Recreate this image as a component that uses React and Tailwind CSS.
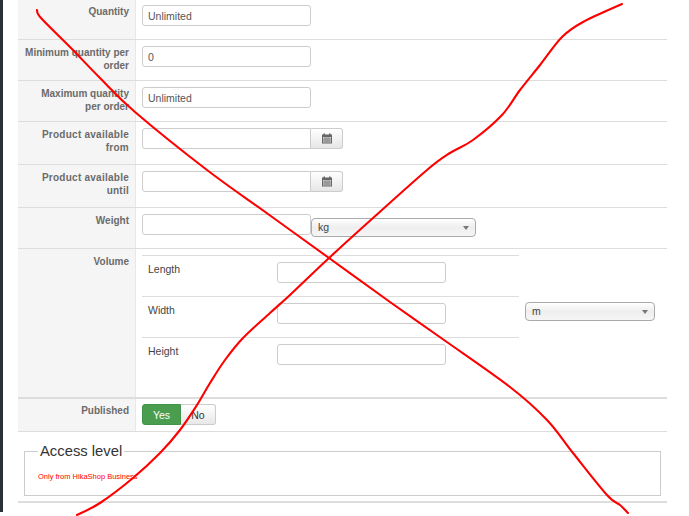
// hand drawn red cross over the form
const STROKE_A = [[37,10],[41,18],[70,47],[100,78],[135,112],[207,170],[268,214],[329,258],[390,302],[444,340],[510,387],[547,420],[573,453],[607,495],[620,505],[628,513]];
const STROKE_B = [[622,4],[583,22],[562,37],[540,65],[520,90],[502,115],[473,140],[450,153],[427,170],[373,218],[329,258],[290,295],[270,313],[243,338],[225,360],[210,383],[197,405],[180,430],[160,453],[133,478],[100,503],[77,515]];

function smoothPath(pts) {
  let d = `M${pts[0][0]} ${pts[0][1]}`;
  for (let i = 0; i < pts.length - 1; i++) {
    const p0 = pts[i - 1] || pts[i];
    const p1 = pts[i];
    const p2 = pts[i + 1];
    const p3 = pts[i + 2] || p2;
    const c1x = p1[0] + (p2[0] - p0[0]) / 6;
    const c1y = p1[1] + (p2[1] - p0[1]) / 6;
    const c2x = p2[0] - (p3[0] - p1[0]) / 6;
    const c2y = p2[1] - (p3[1] - p1[1]) / 6;
    d += ` C${c1x} ${c1y} ${c2x} ${c2y} ${p2[0]} ${p2[1]}`;
  }
  return d;
}

function TextInput({ value, className = '' }) {
  return (
    <div className={`w-[169px] h-[21px] shrink-0 bg-white border border-[#ccc] rounded-[3px] pl-[5px] text-[10.5px] leading-[20px] text-[#555] ${className}`}>
      {value}
    </div>
  );
}

function CalendarIcon() {
  return (
    <svg width="10" height="11" viewBox="0 0 10 11">
      <path d="M0 1.5h1.5V0.5h1.5v1h4V0.5h1.5v1H10v9H0z" fill="#666" />
      <rect x="1" y="4" width="8" height="5.5" fill="#d8d8d8" />
      <path d="M3 4v5.5M5 4v5.5M7 4v5.5M1 6h8M1 8h8" stroke="#777" strokeWidth="0.8" />
    </svg>
  );
}

function DateInput() {
  return (
    <div className="flex">
      <div className="w-[169px] h-[21px] bg-white border border-[#ccc] rounded-l-[3px]" />
      <div className="w-[32px] h-[21px] flex items-center justify-center bg-gradient-to-b from-white to-[#e6e6e6] border border-l-0 border-[#ccc] rounded-r-[3px]">
        <CalendarIcon />
      </div>
    </div>
  );
}

function Select({ value, className = '' }) {
  return (
    <div className={`h-[19px] flex items-center justify-between pl-[6px] pr-[6px] bg-gradient-to-b from-white via-[#eee] to-[#f6f6f6] border border-[#aaa] rounded-[4px] text-[10.5px] text-[#444] ${className}`}>
      <span>{value}</span>
      <span className="w-0 h-0 border-x-[3.5px] border-x-transparent border-t-[4px] border-t-[#777]" />
    </div>
  );
}

function Row({ label, height, children, className = 'border-b', top = 'pt-[6px]' }) {
  return (
    <div className={`flex border-[#ddd] ${height} ${className}`}>
      <div className={`w-[118px] shrink-0 bg-[#f5f5f5] border-r border-[#e8e8e8] pr-[6px] text-right text-[10px] leading-[13px] font-bold text-[#6b6b6b] ${top}`}>
        {label}
      </div>
      <div className={`flex-1 pl-[6px] ${top}`}>{children}</div>
    </div>
  );
}

function VolumeRow({ label, className }) {
  return (
    <div className={`flex h-[41px] pt-[6px] border-[#ddd] ${className}`}>
      <div className="w-[135px] pl-[6px] pt-[1px] text-[10.5px] leading-[13px] text-[#444]">{label}</div>
      <TextInput value="" />
    </div>
  );
}

export default function App() {
  return (
    <div className="relative w-[689px] h-[516px] bg-white overflow-hidden font-['Liberation_Sans',Arial,sans-serif]">
      <div className="flex h-[512px]">
        <div className="w-[3px] bg-[#2a3236]" />
        <div className="w-[649px] ml-[15px]">
          <Row label="Quantity" height="h-[40px]" top="pt-[5px]">
            <TextInput value="Unlimited" />
          </Row>
          <Row label={<>Minimum quantity per<br />order</>} height="h-[41px]">
            <TextInput value="0" />
          </Row>
          <Row label={<>Maximum quantity<br />per order</>} height="h-[41px]">
            <TextInput value="Unlimited" />
          </Row>
          <Row label={<span className="tracking-[0.25px]">Product available<br />from</span>} height="h-[43px]">
            <DateInput />
          </Row>
          <Row label={<span className="tracking-[0.25px]">Product available<br />until</span>} height="h-[43px]">
            <DateInput />
          </Row>
          <Row label="Weight" height="h-[41px]">
            <div className="flex items-start">
              <TextInput value="" />
              <Select value="kg" className="w-[165px] mt-[4px]" />
            </div>
          </Row>
          <Row label="Volume" height="h-[150px]" className="border-b-2">
            <div className="flex">
              <div className="w-[377px]">
                <VolumeRow label="Length" className="border-t" />
                <VolumeRow label="Width" className="border-t" />
                <VolumeRow label="Height" className="border-t" />
              </div>
              <Select value="m" className="w-[130px] ml-[6px] mt-[47px]" />
            </div>
          </Row>
          <Row label="Published" height="h-[33px]" top="pt-[5px]">
            <div className="flex text-[10.5px] h-[21px] leading-[20px] text-center">
              <div className="w-[39px] bg-[#4a9c4f] text-white rounded-l-[3px] border border-[#43924a]">Yes</div>
              <div className="w-[35px] bg-gradient-to-b from-white to-[#e8e8e8] text-[#333] border border-l-0 border-[#ccc] rounded-r-[3px]">No</div>
            </div>
          </Row>
          <fieldset className="mx-[6px] mt-[9px] h-[55px] border border-[#ccc] pl-[13px] pr-0">
            <legend className="px-[2px] text-[14.8px] leading-[20px] text-[#333]">Access level</legend>
            <div className="text-[7.5px] leading-[10px] text-[#f00] mt-[11px]">Only from HikaShop Business</div>
          </fieldset>
          <div className="h-[2px] mt-[5px] bg-[#ddd]" />
        </div>
      </div>
      <svg className="absolute inset-0 pointer-events-none" width="689" height="516" fill="none" stroke="#f00" strokeWidth="2.1" strokeLinecap="round">
        <path d={smoothPath(STROKE_A)} />
        <path d={smoothPath(STROKE_B)} />
      </svg>
    </div>
  );
}
